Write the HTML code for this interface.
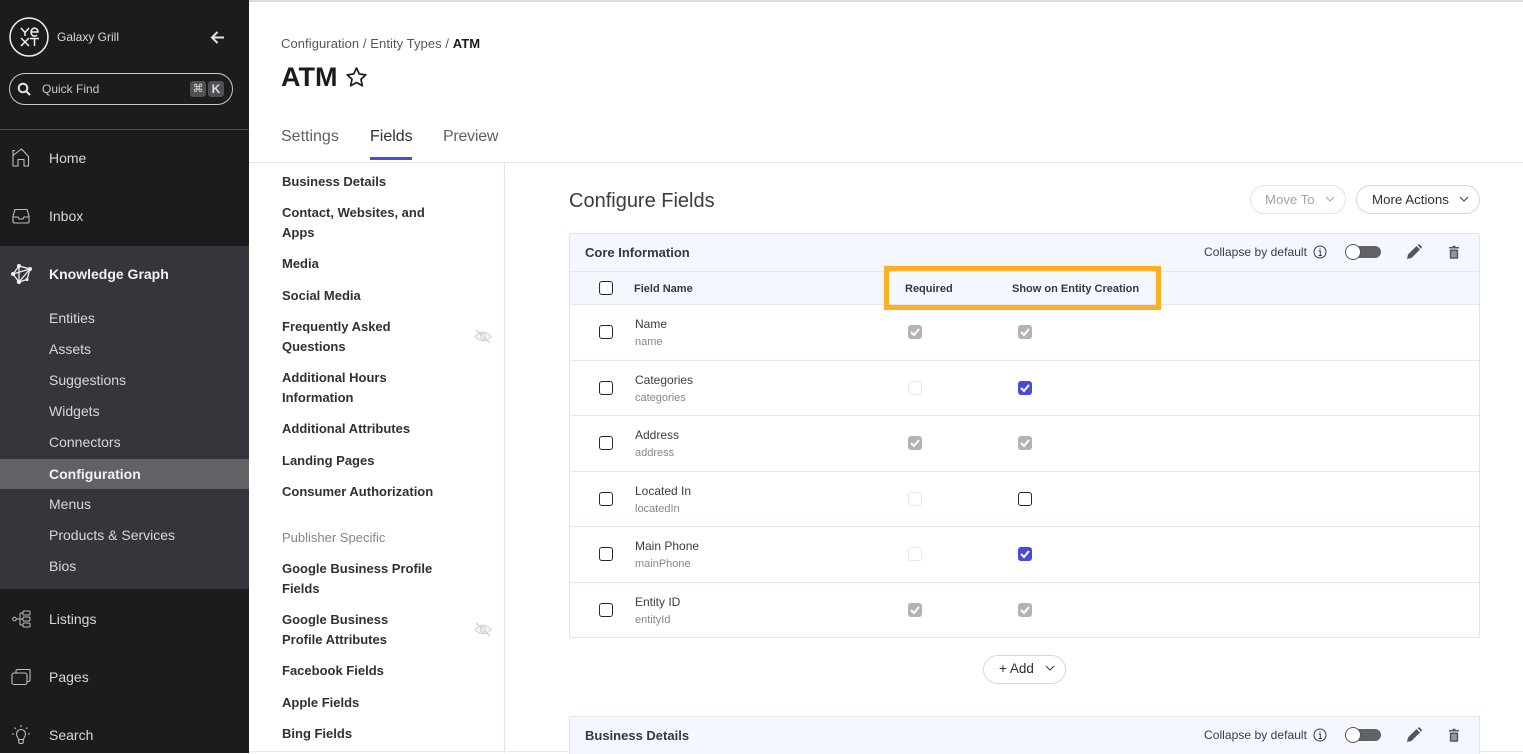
<!DOCTYPE html>
<html><head><meta charset="utf-8"><style>
html,body{margin:0;padding:0;width:1523px;height:753px;overflow:hidden;background:#fff;font-family:"Liberation Sans",sans-serif;color:#2d2f33}
.a{position:absolute}
.t{position:absolute;white-space:nowrap;line-height:20px}
.n{font-size:14px;color:#d8d8d9;left:49px}
.s{font-size:13px;font-weight:bold;color:#2f3136;left:282px;margin-top:1px}
.f{font-size:12px;color:#3a3c40;left:635px}
.k{font-size:11px;color:#85878b;left:635px;margin-top:1px}
.l{position:absolute;background:#e4e7ee;height:1px}
.c{position:absolute;width:12px;height:12px;border:1.2px solid #27282c;border-radius:3px;background:#fff}
.g,.b{position:absolute;width:14px;height:14px;border-radius:3px;background:#b3b3b3}
.b{background:#474bdd}
.g svg,.b svg{position:absolute;left:2px;top:2px}
.d{position:absolute;width:12px;height:12px;border:1px solid #e8e9ec;border-radius:3px;background:#fff}
</style></head><body>
<div class="a" style="left:0;top:0;width:1523px;height:2px;background:#dcdcdc"></div>
<div class="a" style="left:0;top:0;width:249px;height:753px;background:#1b1c1e"></div>
<div class="a" style="left:0;top:246px;width:249px;height:343px;background:#35363b"></div>
<div class="a" style="left:0;top:459px;width:249px;height:30px;background:#616265"></div>
<div class="a" style="left:0;top:129px;width:249px;height:1px;background:#4b4c4f"></div>

<svg class="a" style="left:9px;top:17px" width="40" height="40" viewBox="0 0 40 40" fill="none" stroke="#f0f0f0" stroke-width="1.500"><circle cx="20" cy="20" r="19"/><path d="M12 11l4 4.500 4-4.500M16 15.500v3.500M12 29l8-8M12 21l8 8M21 21.500h9M25.500 21.500v7.500"/><path d="M22 15h7a3.500 4 0 1 0-1 3"/></svg>
<div class="t" style="left:57px;top:27px;font-size:12px;color:#d8d8d9">Galaxy Grill</div>
<svg class="a" style="left:210px;top:30px" width="15" height="15" viewBox="0 0 15 15" fill="none" stroke="#e4e4e4" stroke-width="2"><path d="M14 7.500H2M7.500 2L2 7.500l5.500 5.500"/></svg>
<div class="a" style="left:9px;top:73px;width:222px;height:30px;border:1px solid #c9c9ca;border-radius:16px"></div>
<svg class="a" style="left:17px;top:82px" width="14" height="14" viewBox="0 0 14 14" fill="none" stroke="#e6e6e6" stroke-width="2"><circle cx="6" cy="6" r="4.300"/><path d="M9 9l4 4"/></svg>
<div class="t" style="left:42px;top:79px;font-size:12px;color:#c9c9ca">Quick Find</div>
<div class="a" style="left:190px;top:81px;width:16px;height:16px;background:#505155;border-radius:3px;color:#ddd;font-size:11px;line-height:16px;text-align:center;font-family:'DejaVu Sans',sans-serif">⌘</div>
<div class="a" style="left:208px;top:81px;width:16px;height:16px;background:#505155;border-radius:3px;color:#ddd;font-size:12px;font-weight:bold;line-height:16px;text-align:center">K</div>

<svg class="a" style="left:12px;top:148px" width="18" height="20" viewBox="0 0 18 20" fill="none" stroke="#bdbdbe" stroke-width="1.100"><path d="M1 7.500L9.500 1l7 7.500V18h-4.500v-6.500H6V18H1V2.500h2"/></svg>
<svg class="a" style="left:12px;top:208px" width="18" height="16" viewBox="0 0 18 16" fill="none" stroke="#bdbdbe" stroke-width="1.100"><path d="M1 8l2-6.500h12L17 8v5.500a1.500 1.500 0 0 1-1.500 1.500h-13A1.500 1.500 0 0 1 1 13.500zM1 9h5l1 2h4l1-2h5"/></svg>
<svg class="a" style="left:11px;top:263px" width="21" height="21" viewBox="0 0 21 21" fill="none" stroke="#f0f0f0" stroke-width="1.300"><path d="M8 3L19 6L16 16.500L8 19L2 11zM2 11L19 6M8 3L8 19M8 19L19 6"/><g fill="#f0f0f0" stroke="none"><circle cx="8" cy="3" r="2"/><circle cx="19" cy="6" r="2"/><circle cx="2" cy="11" r="2"/><circle cx="8" cy="19" r="2.200"/><circle cx="16" cy="16.500" r="1.600"/></g></svg>
<svg class="a" style="left:12px;top:610px" width="19" height="19" viewBox="0 0 19 19" fill="none" stroke="#bdbdbe" stroke-width="1"><circle cx="2.500" cy="9" r="1.800"/><path d="M4.500 9H11M8 3v12M8 3h3M8 15h3"/><rect x="11" y="1" width="7" height="4" rx="1"/><rect x="11" y="7" width="7" height="4" rx="1"/><rect x="11" y="13" width="7" height="4" rx="1"/></svg>
<svg class="a" style="left:11px;top:668px" width="20" height="18" viewBox="0 0 20 18" fill="none" stroke="#bdbdbe" stroke-width="1.100"><rect x="1" y="5" width="15" height="11.500" rx="2"/><path d="M5 5V3q0-1.500 1.500-1.500H19V12q0 1.500-1.500 1.500H16"/></svg>
<svg class="a" style="left:12px;top:725px" width="18" height="20" viewBox="0 0 18 20" fill="none" stroke="#bdbdbe" stroke-width="1.100"><path d="M6.500 14.500C6 12 4.500 11.500 4.500 9a4.500 4.500 0 0 1 9 0c0 2.500-1.500 3-2 5.500zM6.800 14.500v2.500q0 1.500 1.500 1.500h1.400q1.500 0 1.500-1.500v-2.500M9 0v2M2.500 2.500l1.300 1.300M15.500 2.500l-1.300 1.300M0 9h2M16 9h2"/></svg>

<div class="t n" style="top:148px">Home</div>
<div class="t n" style="top:206px">Inbox</div>
<div class="t n" style="top:264px;font-weight:bold;color:#f2f2f2">Knowledge Graph</div>
<div class="t n" style="top:308px">Entities</div>
<div class="t n" style="top:339px">Assets</div>
<div class="t n" style="top:370px">Suggestions</div>
<div class="t n" style="top:401px">Widgets</div>
<div class="t n" style="top:432px">Connectors</div>
<div class="t n" style="top:464px;font-weight:bold;color:#f2f2f2">Configuration</div>
<div class="t n" style="top:494px">Menus</div>
<div class="t n" style="top:525px">Products &amp; Services</div>
<div class="t n" style="top:556px">Bios</div>
<div class="t n" style="top:609px">Listings</div>
<div class="t n" style="top:667px">Pages</div>
<div class="t n" style="top:725px">Search</div>

<div class="t" style="left:281px;top:34px;font-size:13px;letter-spacing:.07px;color:#55575b">Configuration / Entity Types / <b style="color:#1b1c1e">ATM</b></div>
<div class="t" style="left:281px;top:62px;font-size:27px;line-height:30px;font-weight:bold;color:#1b1c1e">ATM</div>
<svg class="a" style="left:345px;top:66px" width="23" height="22" viewBox="0 0 23 22" fill="none" stroke="#1b1c1e" stroke-width="1.700" stroke-linejoin="round"><path d="M11.500 2l2.800 6 6.500.8-4.800 4.500 1.300 6.500-5.800-3.300-5.800 3.300 1.300-6.500L2.200 8.800 8.700 8z"/></svg>
<div class="t" style="left:281px;top:127px;font-size:16px;color:#5f6165">Settings</div>
<div class="t" style="left:370px;top:127px;font-size:16px;color:#2d2f33">Fields</div>
<div class="t" style="left:443px;top:127px;font-size:16px;letter-spacing:-.25px;color:#5f6165">Preview</div>
<div class="a" style="left:370px;top:157px;width:42px;height:3px;background:#474bdd"></div>
<div class="a" style="left:249px;top:162px;width:1274px;height:1px;background:#e1e3ea"></div>
<div class="a" style="left:504px;top:163px;width:1px;height:590px;background:#e1e3ea"></div>
<div class="a" style="left:249px;top:751px;width:1274px;height:1px;background:#e8e9ee"></div>

<div class="t s" style="top:171px">Business Details</div>
<div class="t s" style="top:202px">Contact, Websites, and</div>
<div class="t s" style="top:222px">Apps</div>
<div class="t s" style="top:253px">Media</div>
<div class="t s" style="top:285px">Social Media</div>
<div class="t s" style="top:316px">Frequently Asked</div>
<div class="t s" style="top:336px">Questions</div>
<div class="t s" style="top:367px">Additional Hours</div>
<div class="t s" style="top:387px">Information</div>
<div class="t s" style="top:418px">Additional Attributes</div>
<div class="t s" style="top:450px">Landing Pages</div>
<div class="t s" style="top:481px">Consumer Authorization</div>
<div class="t" style="left:282px;top:528px;font-size:13px;color:#85878b">Publisher Specific</div>
<div class="t s" style="top:558px">Google Business Profile</div>
<div class="t s" style="top:578px">Fields</div>
<div class="t s" style="top:609px">Google Business</div>
<div class="t s" style="top:629px">Profile Attributes</div>
<div class="t s" style="top:660px">Facebook Fields</div>
<div class="t s" style="top:692px">Apple Fields</div>
<div class="t s" style="top:723px">Bing Fields</div>
<svg class="a" style="left:474px;top:329px" width="18" height="15" viewBox="0 0 18 15" fill="none" stroke="#d0d1d3" stroke-width="1.200"><path d="M1 7.500Q9-1 17 7.500Q9 16 1 7.500zM2 1l14 13"/><circle cx="9" cy="7.500" r="2.800"/></svg>
<svg class="a" style="left:474px;top:622px" width="18" height="15" viewBox="0 0 18 15" fill="none" stroke="#d0d1d3" stroke-width="1.200"><path d="M1 7.500Q9-1 17 7.500Q9 16 1 7.500zM2 1l14 13"/><circle cx="9" cy="7.500" r="2.800"/></svg>

<div class="t" style="left:569px;top:191px;font-size:20px;color:#3a3c40">Configure Fields</div>
<div class="a" style="left:1250px;top:185px;width:94px;height:27px;border:1px solid #e2e3e8;border-radius:15px"></div>
<div class="t" style="left:1265px;top:190px;font-size:13.200px;color:#a3a4a8">Move To</div>
<svg class="a" style="left:1325px;top:196px" width="10" height="7" viewBox="0 0 10 7" fill="none" stroke="#a3a4a8"><path d="M1 1l4 4 4-4"/></svg>
<div class="a" style="left:1356px;top:185px;width:122px;height:27px;border:1px solid #d5d7de;border-radius:15px"></div>
<div class="t" style="left:1372px;top:190px;font-size:13.300px;color:#2d2f33">More Actions</div>
<svg class="a" style="left:1459px;top:196px" width="10" height="7" viewBox="0 0 10 7" fill="none" stroke="#3a3c40"><path d="M1 1l4 4 4-4"/></svg>

<div class="a" style="left:569px;top:233px;width:909px;height:403px;border:1px solid #e1e4ec;border-radius:2px"></div>
<div class="a" style="left:570px;top:234px;width:909px;height:70px;background:#f4f7fd"></div>
<div class="l" style="left:570px;top:271px;width:909px"></div>
<div class="l" style="left:570px;top:304px;width:909px"></div>
<div class="l" style="left:570px;top:360px;width:909px"></div>
<div class="l" style="left:570px;top:415px;width:909px"></div>
<div class="l" style="left:570px;top:471px;width:909px"></div>
<div class="l" style="left:570px;top:526px;width:909px"></div>
<div class="l" style="left:570px;top:582px;width:909px"></div>
<div class="t" style="left:585px;top:243px;font-size:13px;font-weight:bold;color:#36383c">Core Information</div>
<div class="t" style="left:1204px;top:242px;font-size:12px;letter-spacing:.05px;color:#3a3c40">Collapse by default</div>
<svg class="a" style="left:1313px;top:245px" width="14" height="14" viewBox="0 0 14 14" fill="none" stroke="#3a3c40"><circle cx="7" cy="7" r="6"/><path d="M5.500 6H7.300V10.500M5.500 10.500H9M7 3.200v1.300"/></svg>
<div class="a" style="left:1345px;top:246px;width:36px;height:12px;background:#616265;border-radius:6px"></div>
<div class="a" style="left:1345px;top:244px;width:14px;height:14px;background:#fff;border:1px solid #55575b;border-radius:50%"></div>
<svg class="a" style="left:1406px;top:244px" width="16" height="16" viewBox="0 0 16 16" fill="#4d5766"><path d="M1 15l1-4.500L10.500 2l3.500 3.500L5.500 14zM11.500 1l1-.5q.8-.3 1.500.3l1.500 1.500q.6.700.2 1.500l-.7 1z"/></svg>
<svg class="a" style="left:1448px;top:245px" width="12" height="14" viewBox="0 0 12 14" fill="#4d5766"><path d="M1 2h3.500V.8h3V2H11v1.500H1zM1.800 4.500h8.400v8.300a1 1 0 0 1-1 1H2.800a1 1 0 0 1-1-1z"/><rect x="3.300" y="6" width="5.400" height="6.300" fill="#8e98a6"/></svg>

<div class="c" style="left:599px;top:281px"></div>
<div class="t" style="left:634px;top:278px;margin-top:1px;font-size:11px;font-weight:bold;color:#36383c">Field Name</div>
<div class="t" style="left:905px;top:278px;margin-top:1px;font-size:11px;font-weight:bold;color:#36383c">Required</div>
<div class="t" style="left:1012px;top:278px;margin-top:1px;font-size:11px;font-weight:bold;color:#36383c">Show on Entity Creation</div>
<div class="a" style="left:884px;top:266px;width:267px;height:34px;border:5px solid #fcaf27"></div>

<div class="c" style="left:599px;top:325px"></div>
<div class="t f" style="top:314px">Name</div><div class="t k" style="top:331px">name</div>
<div class="g" style="left:908px;top:325px"><svg width="10" height="10" viewBox="0 0 10 10" fill="none" stroke="#fff" stroke-width="2"><path d="M1 5l3 3 5-6"/></svg></div>
<div class="g" style="left:1018px;top:325px"><svg width="10" height="10" viewBox="0 0 10 10" fill="none" stroke="#fff" stroke-width="2"><path d="M1 5l3 3 5-6"/></svg></div>

<div class="c" style="left:599px;top:381px"></div>
<div class="t f" style="top:370px">Categories</div><div class="t k" style="top:387px">categories</div>
<div class="d" style="left:908px;top:381px"></div>
<div class="b" style="left:1018px;top:381px"><svg width="10" height="10" viewBox="0 0 10 10" fill="none" stroke="#fff" stroke-width="2"><path d="M1 5l3 3 5-6"/></svg></div>

<div class="c" style="left:599px;top:436px"></div>
<div class="t f" style="top:425px">Address</div><div class="t k" style="top:442px">address</div>
<div class="g" style="left:908px;top:436px"><svg width="10" height="10" viewBox="0 0 10 10" fill="none" stroke="#fff" stroke-width="2"><path d="M1 5l3 3 5-6"/></svg></div>
<div class="g" style="left:1018px;top:436px"><svg width="10" height="10" viewBox="0 0 10 10" fill="none" stroke="#fff" stroke-width="2"><path d="M1 5l3 3 5-6"/></svg></div>

<div class="c" style="left:599px;top:492px"></div>
<div class="t f" style="top:481px">Located In</div><div class="t k" style="top:498px">locatedIn</div>
<div class="d" style="left:908px;top:492px"></div>
<div class="c" style="left:1018px;top:492px"></div>

<div class="c" style="left:599px;top:547px"></div>
<div class="t f" style="top:536px">Main Phone</div><div class="t k" style="top:553px">mainPhone</div>
<div class="d" style="left:908px;top:547px"></div>
<div class="b" style="left:1018px;top:547px"><svg width="10" height="10" viewBox="0 0 10 10" fill="none" stroke="#fff" stroke-width="2"><path d="M1 5l3 3 5-6"/></svg></div>

<div class="c" style="left:599px;top:603px"></div>
<div class="t f" style="top:592px">Entity ID</div><div class="t k" style="top:609px">entityId</div>
<div class="g" style="left:908px;top:603px"><svg width="10" height="10" viewBox="0 0 10 10" fill="none" stroke="#fff" stroke-width="2"><path d="M1 5l3 3 5-6"/></svg></div>
<div class="g" style="left:1018px;top:603px"><svg width="10" height="10" viewBox="0 0 10 10" fill="none" stroke="#fff" stroke-width="2"><path d="M1 5l3 3 5-6"/></svg></div>

<div class="a" style="left:983px;top:655px;width:81px;height:27px;border:1px solid #d5d7de;border-radius:15px"></div>
<div class="t" style="left:999px;top:659px;font-size:13.500px;color:#2d2f33">+ Add</div>
<svg class="a" style="left:1045px;top:665px" width="10" height="7" viewBox="0 0 10 7" fill="none" stroke="#3a3c40"><path d="M1 1l4 4 4-4"/></svg>

<div class="a" style="left:569px;top:716px;width:909px;height:37px;background:#f4f7fd;border:1px solid #e1e4ec;border-bottom:0"></div>
<div class="t" style="left:585px;top:726px;font-size:13px;font-weight:bold;color:#36383c">Business Details</div>
<div class="t" style="left:1204px;top:725px;font-size:12px;letter-spacing:.05px;color:#3a3c40">Collapse by default</div>
<svg class="a" style="left:1313px;top:728px" width="14" height="14" viewBox="0 0 14 14" fill="none" stroke="#3a3c40"><circle cx="7" cy="7" r="6"/><path d="M5.500 6H7.300V10.500M5.500 10.500H9M7 3.200v1.300"/></svg>
<div class="a" style="left:1345px;top:729px;width:36px;height:12px;background:#616265;border-radius:6px"></div>
<div class="a" style="left:1345px;top:727px;width:14px;height:14px;background:#fff;border:1px solid #55575b;border-radius:50%"></div>
<svg class="a" style="left:1406px;top:727px" width="16" height="16" viewBox="0 0 16 16" fill="#4d5766"><path d="M1 15l1-4.500L10.500 2l3.500 3.500L5.500 14zM11.500 1l1-.5q.8-.3 1.500.3l1.500 1.500q.6.700.2 1.500l-.7 1z"/></svg>
<svg class="a" style="left:1448px;top:728px" width="12" height="14" viewBox="0 0 12 14" fill="#4d5766"><path d="M1 2h3.500V.8h3V2H11v1.500H1zM1.800 4.500h8.400v8.300a1 1 0 0 1-1 1H2.800a1 1 0 0 1-1-1z"/><rect x="3.300" y="6" width="5.400" height="6.300" fill="#8e98a6"/></svg>
</body></html>
